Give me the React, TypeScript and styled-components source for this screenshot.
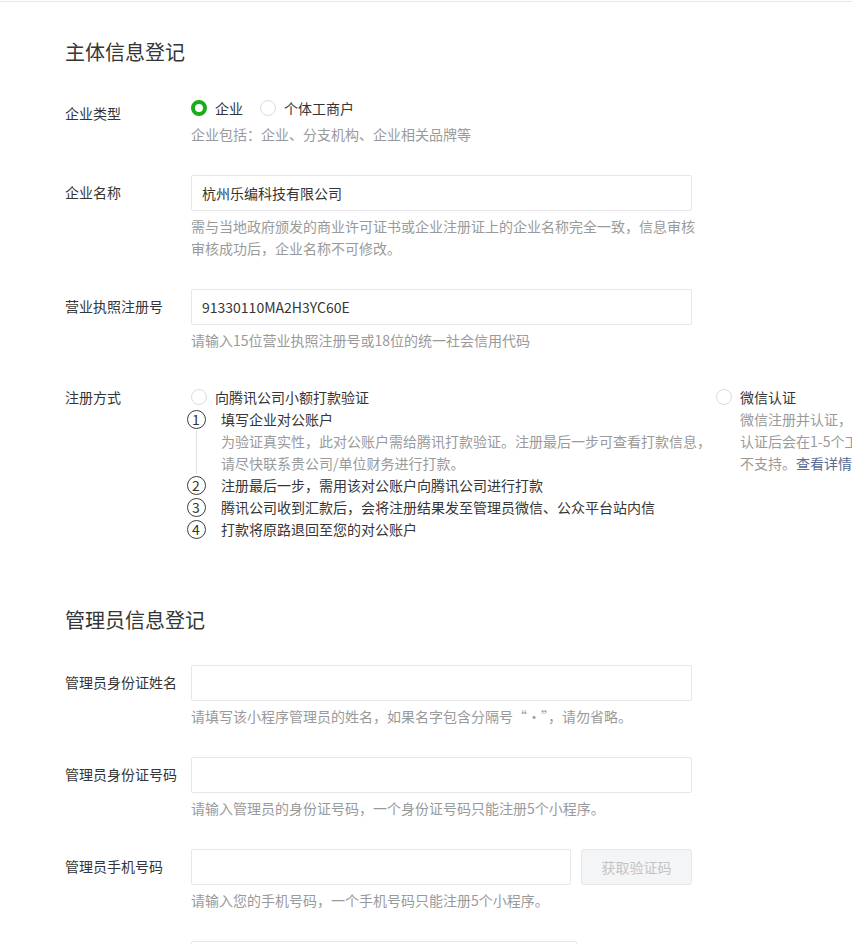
import styled, { createGlobalStyle } from 'styled-components';

const GlobalStyle = createGlobalStyle`
    html, body {
        margin: 0;
        padding: 0;
        background: #ffffff;
        overflow-x: hidden;
    }
    body {
        font-family: "Microsoft YaHei", "Noto Sans CJK SC", "Noto Sans", sans-serif;
        font-size: 14px;
        color: #353535;
    }
`;

const Page = styled.div`
    width: 1100px;
    margin-top: 1px;
    border-top: 1px solid #e7e7eb;
    padding: 0 65px 40px;
    box-sizing: border-box;
`;

const Section = styled.section`
    display: flex;
    flex-direction: column;
`;

const SectionTitle = styled.h2`
    margin: 36px 0 31px;
    font-size: 20px;
    line-height: 28px;
    font-weight: 400;
    color: #353535;
`;

const Row = styled.div`
    display: flex;
    align-items: flex-start;
    margin-bottom: 30px;
`;

const Label = styled.div<{ $compact?: boolean }>`
    width: 126px;
    flex-shrink: 0;
    line-height: ${(p) => (p.$compact ? '32px' : '34px')};
    font-size: 14px;
    color: #353535;
`;

const Field = styled.div<{ $pad?: number }>`
    display: flex;
    flex-direction: column;
    padding-top: ${(p) => p.$pad ?? 0}px;
`;

const Input = styled.input<{ $width?: number }>`
    width: ${(p) => p.$width ?? 501}px;
    height: 36px;
    box-sizing: border-box;
    border: 1px solid #e7e7eb;
    border-radius: 2px;
    padding: 0 10px;
    font-family: inherit;
    font-size: 14px;
    color: #353535;
    outline: none;
`;

const InputLine = styled.div`
    display: flex;
    gap: 10px;
`;

const CodeButton = styled.button`
    width: 111px;
    height: 36px;
    box-sizing: border-box;
    border: 1px solid #e4e8eb;
    border-radius: 3px;
    background: #f4f5f6;
    color: #c4c4c4;
    font-family: inherit;
    font-size: 14px;
    cursor: not-allowed;
`;

const Tip = styled.div<{ $width?: number }>`
    margin-top: 4px;
    width: ${(p) => p.$width ?? 515}px;
    font-size: 14px;
    line-height: 22px;
    color: #9a9a9a;
`;

const RadioGroup = styled.div`
    display: flex;
    align-items: center;
    gap: 17px;
    line-height: 22px;
`;

const RadioItem = styled.label`
    display: flex;
    align-items: center;
    gap: 8px;
    line-height: 22px;
    color: #353535;
`;

const RadioDot = styled.span<{ $checked?: boolean }>`
    width: 16px;
    height: 16px;
    box-sizing: border-box;
    border-radius: 50%;
    background: #ffffff;
    border: ${(p) => (p.$checked ? '4.5px solid #1aad19' : '1px solid #dcdcdc')};
    flex-shrink: 0;
`;

const MethodList = styled.div`
    display: flex;
    align-items: flex-start;
`;

const Method = styled.div<{ $width?: number }>`
    width: ${(p) => (p.$width ? `${p.$width}px` : 'auto')};
    display: flex;
    flex-direction: column;
`;

const MethodDesc = styled.div`
    padding-left: 24px;
    line-height: 22px;
    color: #9a9a9a;
    white-space: nowrap;
`;

const Link = styled.a`
    color: #576b95;
    text-decoration: none;
`;

const Step = styled.div`
    display: flex;
    align-items: stretch;
    margin-left: -5px;
`;

const StepRail = styled.div`
    width: 20px;
    display: flex;
    flex-direction: column;
    align-items: center;
    flex-shrink: 0;
`;

const StepCircle = styled.span`
    width: 19px;
    height: 19px;
    margin: 1.5px 0;
    box-sizing: border-box;
    border: 1px solid #3e3e3e;
    border-radius: 50%;
    display: flex;
    align-items: center;
    justify-content: center;
    font-size: 14px;
    line-height: 1;
    color: #353535;
`;

const StepLine = styled.span`
    flex: 1;
    width: 1px;
    background: #e1e1e1;
`;

const StepBody = styled.div`
    padding-left: 15px;
    line-height: 22px;
    color: #353535;
`;

const StepNote = styled.div`
    color: #9a9a9a;
`;

const steps = [
    {
        title: '填写企业对公账户',
        note: ['为验证真实性，此对公账户需给腾讯打款验证。注册最后一步可查看打款信息，', '请尽快联系贵公司/单位财务进行打款。'],
    },
    { title: '注册最后一步，需用该对公账户向腾讯公司进行打款' },
    { title: '腾讯公司收到汇款后，会将注册结果发至管理员微信、公众平台站内信' },
    { title: '打款将原路退回至您的对公账户' },
];

export default function App() {
    return (
        <>
            <GlobalStyle />
            <Page>
                <Section>
                    <SectionTitle>主体信息登记</SectionTitle>

                    <Row>
                        <Label $compact>企业类型</Label>
                        <Field>
                            <RadioGroup>
                                <RadioItem>
                                    <RadioDot $checked />
                                    企业
                                </RadioItem>
                                <RadioItem>
                                    <RadioDot />
                                    个体工商户
                                </RadioItem>
                            </RadioGroup>
                            <Tip>企业包括：企业、分支机构、企业相关品牌等</Tip>
                        </Field>
                    </Row>

                    <Row>
                        <Label>企业名称</Label>
                        <Field>
                            <Input defaultValue="杭州乐编科技有限公司" />
                            <Tip $width={515}>
                                需与当地政府颁发的商业许可证书或企业注册证上的企业名称完全一致，信息审核审核成功后，企业名称不可修改。
                            </Tip>
                        </Field>
                    </Row>

                    <Row>
                        <Label>营业执照注册号</Label>
                        <Field>
                            <Input defaultValue="91330110MA2H3YC60E" />
                            <Tip>请输入15位营业执照注册号或18位的统一社会信用代码</Tip>
                        </Field>
                    </Row>

                    <Row>
                        <Label $compact>注册方式</Label>
                        <Field $pad={5}>
                            <MethodList>
                                <Method $width={525}>
                                    <RadioItem>
                                        <RadioDot />
                                        向腾讯公司小额打款验证
                                    </RadioItem>
                                    {steps.map((s, i) => (
                                        <Step key={s.title}>
                                            <StepRail>
                                                <StepCircle>{i + 1}</StepCircle>
                                                {s.note && <StepLine />}
                                            </StepRail>
                                            <StepBody>
                                                {s.title}
                                                {s.note && s.note.map((n) => <StepNote key={n}>{n}</StepNote>)}
                                            </StepBody>
                                        </Step>
                                    ))}
                                </Method>
                                <Method>
                                    <RadioItem>
                                        <RadioDot />
                                        微信认证
                                    </RadioItem>
                                    <MethodDesc>
                                        微信注册并认证，需支付300元认证费用，
                                        <br />
                                        认证后会在1-5个工作日内完成审核，海外主体暂
                                        <br />
                                        不支持。<Link href="#">查看详情</Link>
                                    </MethodDesc>
                                </Method>
                            </MethodList>
                        </Field>
                    </Row>
                </Section>

                <Section>
                    <SectionTitle>管理员信息登记</SectionTitle>

                    <Row>
                        <Label>管理员身份证姓名</Label>
                        <Field>
                            <Input />
                            <Tip>请填写该小程序管理员的姓名，如果名字包含分隔号“·”，请勿省略。</Tip>
                        </Field>
                    </Row>

                    <Row>
                        <Label>管理员身份证号码</Label>
                        <Field>
                            <Input />
                            <Tip>请输入管理员的身份证号码，一个身份证号码只能注册5个小程序。</Tip>
                        </Field>
                    </Row>

                    <Row>
                        <Label>管理员手机号码</Label>
                        <Field>
                            <InputLine>
                                <Input $width={380} />
                                <CodeButton disabled>获取验证码</CodeButton>
                            </InputLine>
                            <Tip>请输入您的手机号码，一个手机号码只能注册5个小程序。</Tip>
                        </Field>
                    </Row>

                    <Row>
                        <Label />
                        <Field>
                            <Input $width={386} />
                        </Field>
                    </Row>
                </Section>
            </Page>
        </>
    );
}
